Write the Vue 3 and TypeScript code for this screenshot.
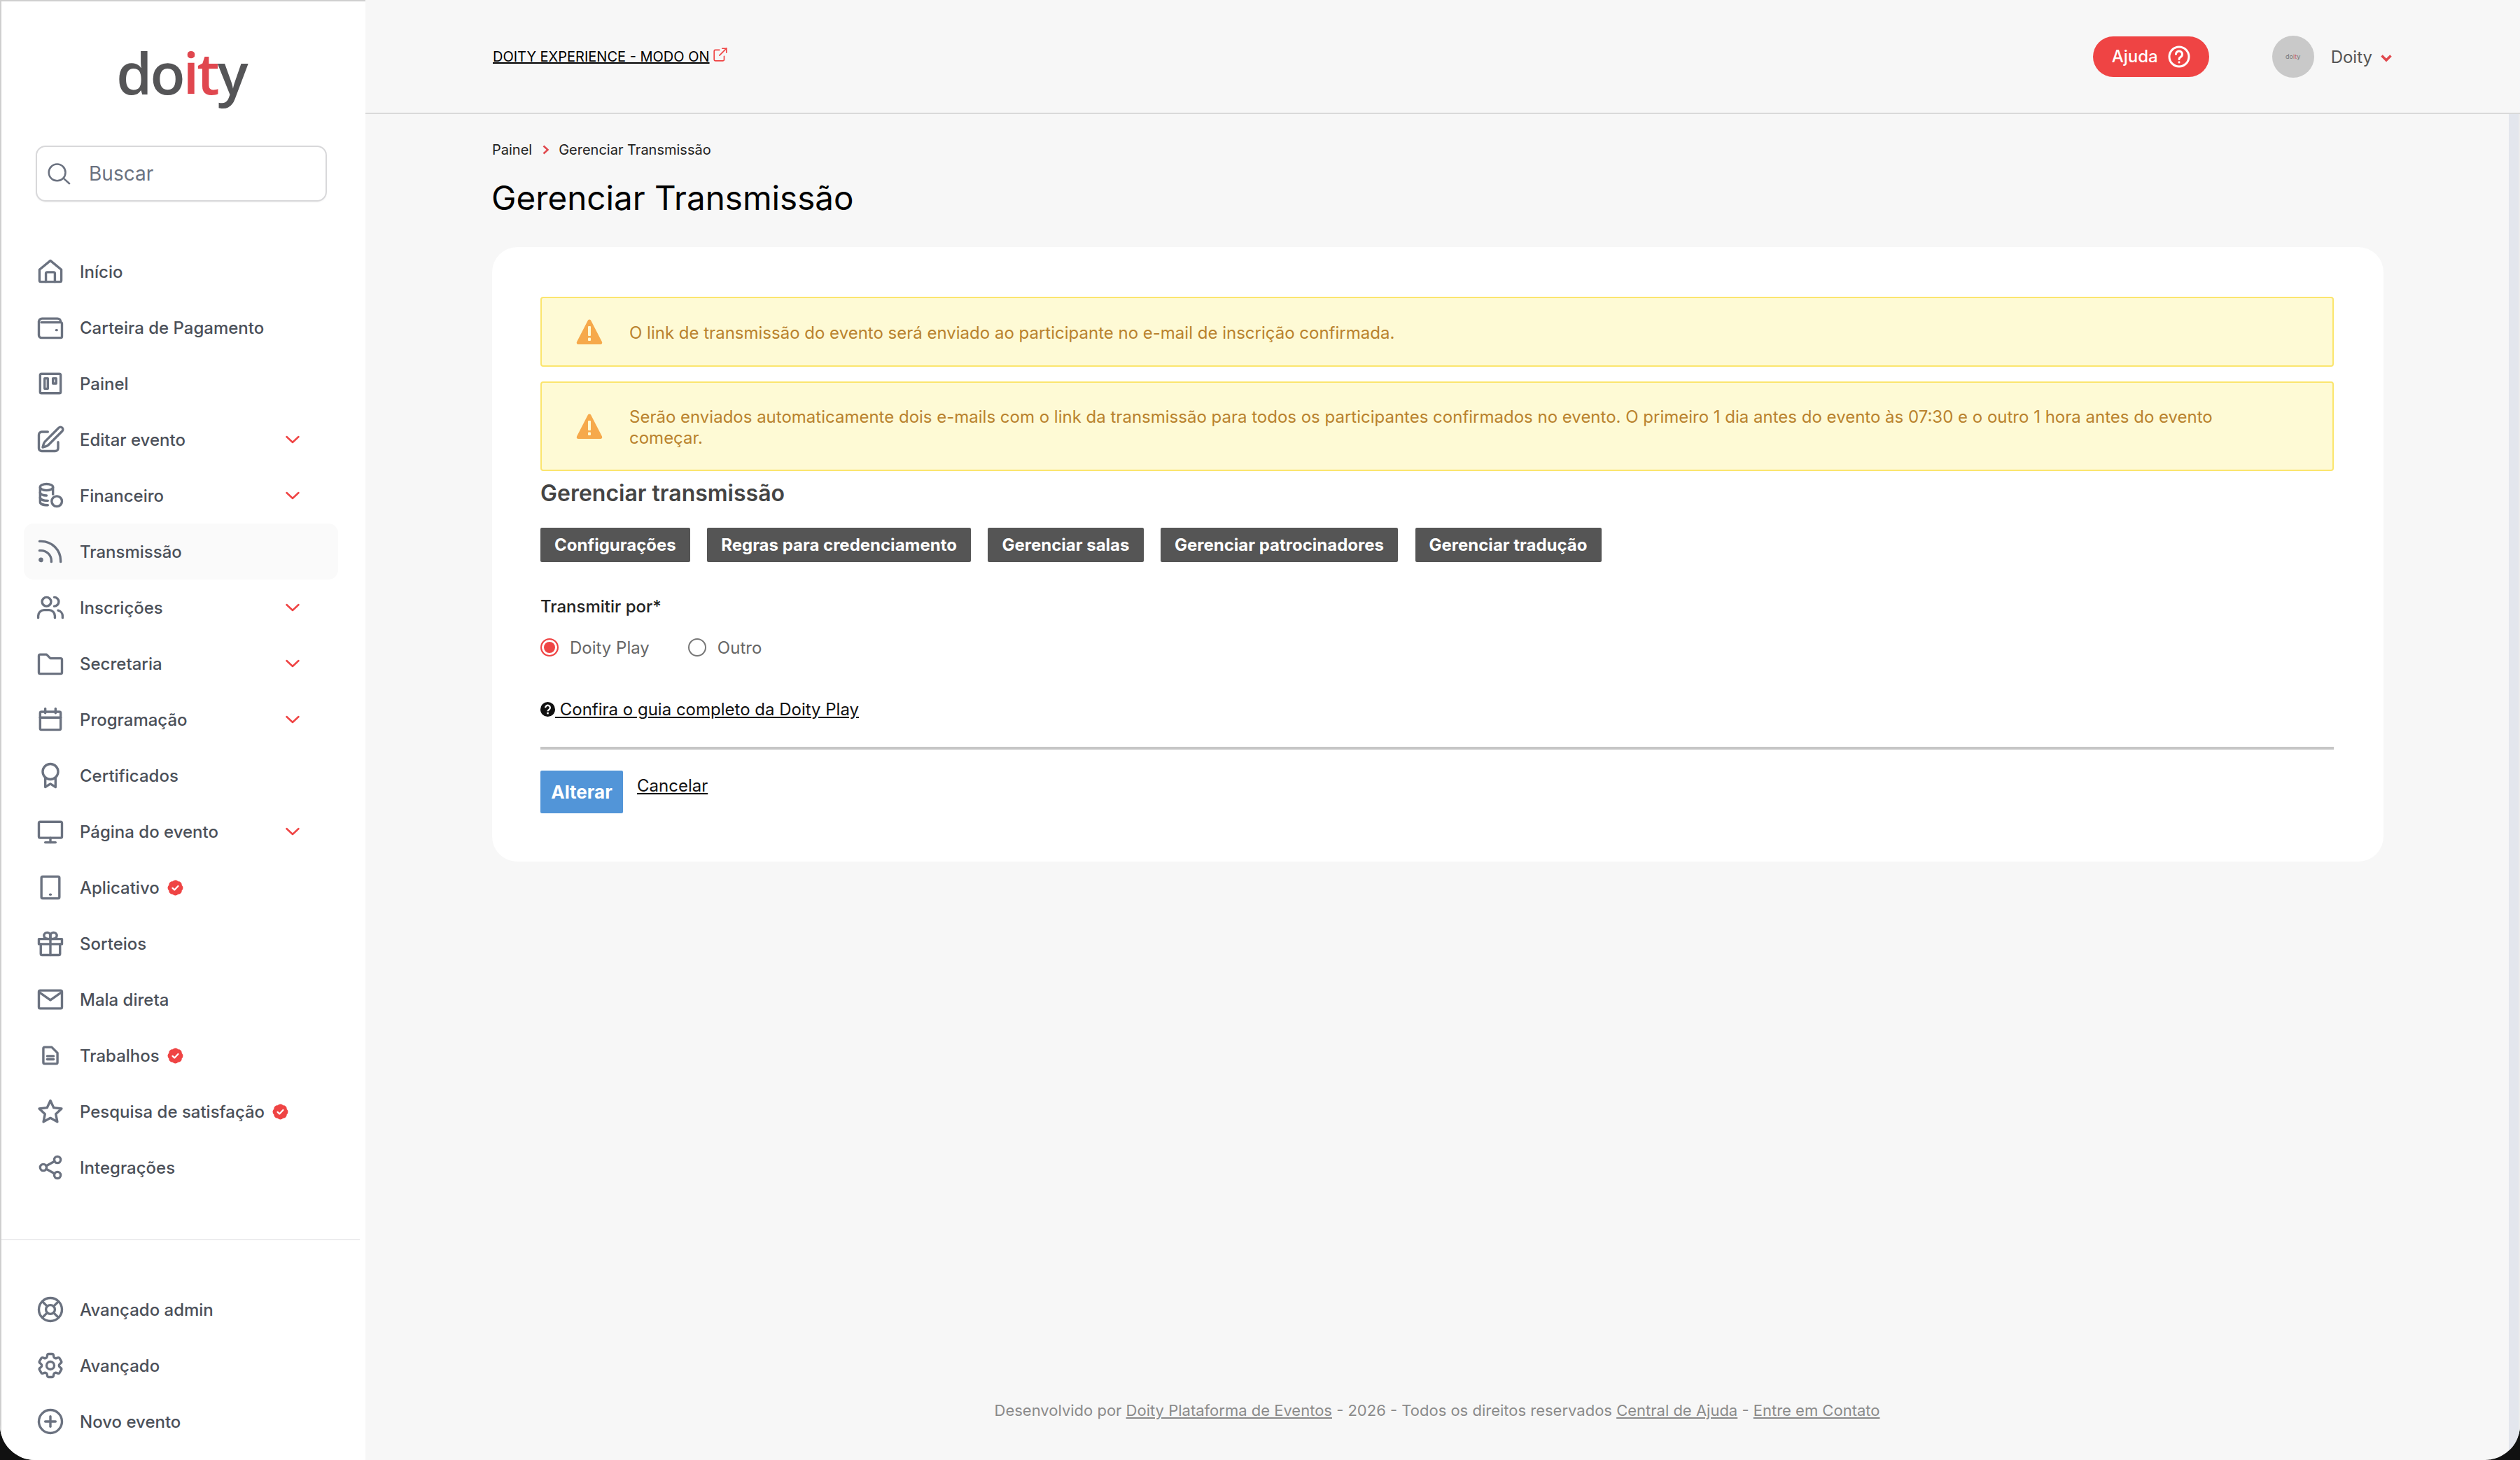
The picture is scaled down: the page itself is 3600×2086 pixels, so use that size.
<script setup lang="ts">
interface NavItem {
  label: string;
  icon: string[];
  chevron?: boolean;
  badge?: boolean;
  active?: boolean;
}

const icons: Record<string, string[]> = {
  home: ['M3.500 10.500 12 3.500l8.500 7V19a1 1 0 0 1-1 1h-15a1 1 0 0 1-1-1z', 'M8.500 20v-6.500a1 1 0 0 1 1-1h5a1 1 0 0 1 1 1V20'],
  wallet: ['M3 7.500A2.500 2.500 0 0 1 5.500 5h12A2.500 2.500 0 0 1 20 7.500', 'M3 7.500V18a2 2 0 0 0 2 2h15a1 1 0 0 0 1-1V9a1 1 0 0 0-1-1H5', 'M16.600 14h.4'],
  board: ['M4 5.500a1 1 0 0 1 1-1h14a1 1 0 0 1 1 1v13a1 1 0 0 1-1 1H5a1 1 0 0 1-1-1z', 'M7.500 8h2.500v8H7.500z', 'M14 8h2.500v4H14z'],
  edit: ['m16.862 4.487 1.687-1.688a1.875 1.875 0 1 1 2.652 2.652L10.582 16.070a4.500 4.500 0 0 1-1.897 1.130L6 18l.8-2.685a4.500 4.500 0 0 1 1.130-1.897l8.932-8.931Z', 'M18 14v4.750A2.250 2.250 0 0 1 15.750 21H5.250A2.250 2.250 0 0 1 3 18.750V8.250A2.250 2.250 0 0 1 5.250 6H10'],
  coins: ['M4 5.500C4 4.100 6.200 3 9 3s5 1.100 5 2.500S11.800 8 9 8 4 6.900 4 5.500z', 'M4 5.500V17c0 1.400 2.200 2.500 6 2.500', 'M14 5.500V11', 'M4 9.500c0 1.400 2.200 2.500 5 2.500', 'M4 13.500c0 1.400 2.200 2.500 6 2.500', 'M21 16.500a4 4 0 1 1-8 0 4 4 0 0 1 8 0z'],
  rss: ['M12.750 20v-.75a8 8 0 0 0-8-8H3.500', 'M3.500 4h1.250c8.500 0 15.250 6.750 15.250 15.250V20', 'M5.500 18.500a.9.9 0 1 1-1.800 0 .9.9 0 0 1 1.800 0z'],
  users: ['M12.500 7.500a3.500 3.500 0 1 1-7 0 3.500 3.500 0 0 1 7 0z', 'M15 4a3.500 3.500 0 0 1 0 7', 'M2.500 20v-1.500a4.500 4.500 0 0 1 4.500-4.500h4a4.500 4.500 0 0 1 4.500 4.500V20', 'M18 14.300a4.500 4.500 0 0 1 3.500 4.200V20'],
  folder: ['M3 6a1 1 0 0 1 1-1h5l3 3h8a1 1 0 0 1 1 1v10a1 1 0 0 1-1 1H4a1 1 0 0 1-1-1z'],
  calendar: ['M4 7a1 1 0 0 1 1-1h14a1 1 0 0 1 1 1v12a1 1 0 0 1-1 1H5a1 1 0 0 1-1-1z', 'M4 10.500h16', 'M8 3.500V7', 'M16 3.500V7'],
  award: ['M18 9a6 6 0 1 1-12 0 6 6 0 0 1 12 0z', 'M8 14v7l4-2.500 4 2.500v-7'],
  monitor: ['M3 5.500a1 1 0 0 1 1-1h16a1 1 0 0 1 1 1V16a1 1 0 0 1-1 1H4a1 1 0 0 1-1-1z', 'M12 17v3.500', 'M8 20.500h8'],
  tablet: ['M5 4.500a1 1 0 0 1 1-1h12a1 1 0 0 1 1 1v15a1 1 0 0 1-1 1H6a1 1 0 0 1-1-1z', 'M11.700 17.500h.6'],
  gift: ['M3 8.500h18v4H3z', 'M4.500 12.500V20a1 1 0 0 0 1 1h13a1 1 0 0 0 1-1v-7.500', 'M12 8.500V21', 'M12 8.500C10 8.500 7 8.500 7 6a2.300 2.300 0 0 1 5 0z', 'M12 8.500c2 0 5 0 5-2.500a2.300 2.300 0 0 0-5 0z'],
  mail: ['M3 6a1 1 0 0 1 1-1h16a1 1 0 0 1 1 1v12a1 1 0 0 1-1 1H4a1 1 0 0 1-1-1z', 'm3.500 6.500 8.500 6 8.500-6'],
  file: ['M6.500 6.500a1 1 0 0 1 1-1h5.500l4.500 4.500v7.500a1 1 0 0 1-1 1h-9a1 1 0 0 1-1-1z', 'M9.500 12.500h5', 'M9.500 15h5'],
  star: ['M12 3.500l2.600 5.600 6.100.7-4.500 4.200 1.200 6.100L12 17.100l-5.400 3 1.200-6.100-4.500-4.200 6.100-.7z'],
  share: ['M20 6a2.500 2.500 0 1 1-5 0 2.500 2.500 0 0 1 5 0z', 'M9 12a2.500 2.500 0 1 1-5 0 2.500 2.500 0 0 1 5 0z', 'M20 18a2.500 2.500 0 1 1-5 0 2.500 2.500 0 0 1 5 0z', 'm8.800 10.800 6.400-3.600', 'm8.800 13.200 6.400 3.600'],
  buoy: ['M21 12a9 9 0 1 1-18 0 9 9 0 0 1 18 0z', 'M15.500 12a3.500 3.500 0 1 1-7 0 3.500 3.500 0 0 1 7 0z', 'm5.700 5.700 3.800 3.800', 'm18.300 5.700-3.800 3.800', 'm5.700 18.300 3.800-3.800', 'm18.300 18.300-3.800-3.800'],
  gear: ['M9.594 3.940c.09-.542.56-.94 1.110-.94h2.593c.55 0 1.020.398 1.110.940l.213 1.281c.063.374.313.686.645.870.074.040.147.083.220.127.325.196.720.257 1.075.124l1.217-.456a1.125 1.125 0 0 1 1.370.490l1.296 2.247a1.125 1.125 0 0 1-.260 1.431l-1.003.827c-.293.241-.438.613-.430.992a7.723 7.723 0 0 1 0 .255c-.008.378.137.750.430.991l1.004.827c.424.350.534.955.260 1.430l-1.298 2.247a1.125 1.125 0 0 1-1.369.491l-1.217-.456c-.355-.133-.750-.072-1.076.124a6.470 6.470 0 0 1-.220.128c-.331.183-.581.495-.644.869l-.213 1.281c-.090.543-.560.940-1.110.940h-2.594c-.550 0-1.019-.398-1.110-.940l-.213-1.281c-.062-.374-.312-.686-.644-.870a6.520 6.520 0 0 1-.220-.127c-.325-.196-.720-.257-1.076-.124l-1.217.456a1.125 1.125 0 0 1-1.369-.490l-1.297-2.247a1.125 1.125 0 0 1 .260-1.431l1.004-.827c.292-.240.437-.613.430-.991a6.932 6.932 0 0 1 0-.255c.007-.380-.138-.751-.430-.992l-1.004-.827a1.125 1.125 0 0 1-.260-1.430l1.297-2.247a1.125 1.125 0 0 1 1.370-.491l1.216.456c.356.133.751.072 1.076-.124.072-.044.146-.086.220-.128.332-.183.582-.495.644-.869l.214-1.280Z', 'M15 12a3 3 0 1 1-6 0 3 3 0 0 1 6 0Z'],
  plus: ['M21 12a9 9 0 1 1-18 0 9 9 0 0 1 18 0z', 'M12 8v8', 'M8 12h8'],
};

const navItems: NavItem[] = [
  { label: 'Início', icon: icons.home },
  { label: 'Carteira de Pagamento', icon: icons.wallet },
  { label: 'Painel', icon: icons.board },
  { label: 'Editar evento', icon: icons.edit, chevron: true },
  { label: 'Financeiro', icon: icons.coins, chevron: true },
  { label: 'Transmissão', icon: icons.rss, active: true },
  { label: 'Inscrições', icon: icons.users, chevron: true },
  { label: 'Secretaria', icon: icons.folder, chevron: true },
  { label: 'Programação', icon: icons.calendar, chevron: true },
  { label: 'Certificados', icon: icons.award },
  { label: 'Página do evento', icon: icons.monitor, chevron: true },
  { label: 'Aplicativo', icon: icons.tablet, badge: true },
  { label: 'Sorteios', icon: icons.gift },
  { label: 'Mala direta', icon: icons.mail },
  { label: 'Trabalhos', icon: icons.file, badge: true },
  { label: 'Pesquisa de satisfação', icon: icons.star, badge: true },
  { label: 'Integrações', icon: icons.share },
];

const bottomItems: NavItem[] = [
  { label: 'Avançado admin', icon: icons.buoy },
  { label: 'Avançado', icon: icons.gear },
  { label: 'Novo evento', icon: icons.plus },
];

const tabs = ['Configurações', 'Regras para credenciamento', 'Gerenciar salas', 'Gerenciar patrocinadores', 'Gerenciar tradução'];

const alerts = [
  'O link de transmissão do evento será enviado ao participante no e-mail de inscrição confirmada.',
  'Serão enviados automaticamente dois e-mails com o link da transmissão para todos os participantes confirmados no evento. O primeiro 1 dia antes do evento às 07:30 e o outro 1 hora antes do evento começar.',
];

const badgePath = 'M8.603 3.799A4.49 4.49 0 0 1 12 2.25c1.357 0 2.573.6 3.397 1.549a4.49 4.49 0 0 1 3.498 1.307 4.491 4.491 0 0 1 1.307 3.497A4.49 4.49 0 0 1 21.75 12a4.49 4.49 0 0 1-1.549 3.397 4.491 4.491 0 0 1-1.307 3.497 4.491 4.491 0 0 1-3.497 1.307A4.49 4.49 0 0 1 12 21.75a4.49 4.49 0 0 1-3.397-1.549 4.49 4.49 0 0 1-3.498-1.306 4.491 4.491 0 0 1-1.307-3.498A4.49 4.49 0 0 1 2.25 12c0-1.357.6-2.573 1.549-3.397a4.49 4.49 0 0 1 1.307-3.497 4.49 4.49 0 0 1 3.497-1.307Z';
</script>

<template>
  <div class="app">
    <aside class="sidebar">
      <div class="brand"><span>do</span><span class="brand-red">it</span><span>y</span></div>
      <div class="search">
        <svg class="search-icon" viewBox="0 0 24 24" fill="none" stroke="currentColor" stroke-width="1.600" stroke-linecap="round">
          <path d="M18 11a7.500 7.500 0 1 1-15 0 7.500 7.500 0 0 1 15 0z" />
          <path d="m16.500 16.500 5 4.500" />
        </svg>
        <span>Buscar</span>
      </div>
      <nav class="nav">
        <a v-for="item in navItems" :key="item.label" class="nav-row" :class="{ active: item.active }">
          <svg class="nav-icon" viewBox="0 0 24 24" fill="none" stroke="currentColor" stroke-width="1.850" stroke-linecap="round" stroke-linejoin="round">
            <path v-for="d in item.icon" :key="d" :d="d" />
          </svg>
          <span class="nav-label">{{ item.label }}</span>
          <svg v-if="item.badge" class="badge" viewBox="0 0 24 24">
            <path :d="badgePath" fill="#ef4444" />
            <path d="m8.500 12.300 2.400 2.300 4.600-4.800" fill="none" stroke="#fff" stroke-width="2" stroke-linecap="round" stroke-linejoin="round" />
          </svg>
          <svg v-if="item.chevron" class="chevron" viewBox="0 0 20 12" fill="none" stroke="#ef4444" stroke-width="2.500" stroke-linecap="round" stroke-linejoin="round">
            <path d="m1.500 2 8.500 8 8.500-8" />
          </svg>
        </a>
      </nav>
      <div class="side-divider"></div>
      <nav class="nav nav-bottom">
        <a v-for="item in bottomItems" :key="item.label" class="nav-row">
          <svg class="nav-icon" viewBox="0 0 24 24" fill="none" stroke="currentColor" stroke-width="1.850" stroke-linecap="round" stroke-linejoin="round">
            <path v-for="d in item.icon" :key="d" :d="d" />
          </svg>
          <span class="nav-label">{{ item.label }}</span>
        </a>
      </nav>
    </aside>

    <div class="main">
      <header class="topbar">
        <a class="experience">DOITY EXPERIENCE - MODO ON</a>
        <svg class="external" viewBox="0 0 20 20" fill="none" stroke="#ef4444" stroke-width="1.500" stroke-linecap="round" stroke-linejoin="round">
          <path d="M9 4H3.500A1.500 1.500 0 0 0 2 5.500v11A1.500 1.500 0 0 0 3.500 18h10a1.500 1.500 0 0 0 1.500-1.500V12" />
          <path d="M9 11 18 2" />
          <path d="M12.500 2H18v5.500" />
        </svg>
        <div class="help">
          <span>Ajuda</span>
          <svg class="help-icon" viewBox="0 0 32 32" fill="none" stroke="#fff" stroke-width="3" stroke-linecap="round">
            <circle cx="16" cy="16" r="14" />
            <path d="M11.500 12.500a4.500 4.500 0 1 1 6.800 3.900c-1.400.8-2.300 1.700-2.300 3.100" />
            <path d="M16 23.800v.1" />
          </svg>
        </div>
        <div class="avatar"><span>do</span><span class="avatar-red">it</span><span>y</span></div>
        <span class="user">Doity</span>
        <svg class="user-chevron" viewBox="0 0 16 12" fill="none" stroke="#e0474c" stroke-width="3.500" stroke-linejoin="miter">
          <path d="m1.500 2.500 6.500 6.500 6.500-6.500" />
        </svg>
      </header>

      <div class="body">
        <div class="content">
          <div class="crumbs">
            <span>Painel</span>
            <svg class="crumb-chevron" viewBox="0 0 10 14" fill="none" stroke="#e0474c" stroke-width="2.500">
              <path d="m1.500 1.500 6 5.500-6 5.500" />
            </svg>
            <span>Gerenciar Transmissão</span>
          </div>
          <h1 class="title">Gerenciar Transmissão</h1>

          <section class="card">
            <div v-for="text in alerts" :key="text" class="alert">
              <svg class="alert-icon" viewBox="0 0 38 38">
                <path d="M17 2.500c1-1.500 3-1.500 4 0l16 31c.8 1.500-.2 3.500-2 3.500H3c-1.800 0-2.800-2-2-3.500z" fill="#f6a94b" />
                <rect x="17" y="11" width="4" height="14" rx="1" fill="#fefad5" />
                <rect x="17" y="27.500" width="4" height="4.500" rx="1" fill="#fefad5" />
              </svg>
              <p class="alert-text">{{ text }}</p>
            </div>

            <h2 class="section-title">Gerenciar transmissão</h2>
            <div class="tabs">
              <button v-for="tab in tabs" :key="tab" class="tab">{{ tab }}</button>
            </div>

            <div class="field-label">Transmitir por*</div>
            <div class="radios">
              <label class="radio-item">
                <span class="radio checked"></span>
                <span>Doity Play</span>
              </label>
              <label class="radio-item">
                <span class="radio"></span>
                <span>Outro</span>
              </label>
            </div>

            <a class="guide">
              <svg class="guide-icon" viewBox="0 0 20 20">
                <circle cx="10" cy="10" r="10" fill="#111" />
                <path d="M6.800 7.800a3.200 3.200 0 1 1 4.900 2.700c-1 .6-1.700 1.100-1.700 2.200" fill="none" stroke="#fff" stroke-width="2.200" />
                <rect x="8.800" y="14" width="2.400" height="2.500" fill="#fff" />
              </svg><span class="guide-text"> Confira o guia completo da Doity Play</span>
            </a>

            <div class="form-divider"></div>
            <div class="actions">
              <button class="submit">Alterar</button>
              <a class="cancel">Cancelar</a>
            </div>
          </section>

          <footer class="footer">
            Desenvolvido por <a>Doity Plataforma de Eventos</a> - 2026 - Todos os direitos reservados <a>Central de Ajuda</a> - <a>Entre em Contato</a>
          </footer>
        </div>
        <div class="scrollbar"></div>
      </div>
    </div>
  </div>
</template>

<style scoped>
* { box-sizing: border-box; }
.app {
  display: flex;
  width: 3600px;
  height: 2086px;
  overflow: hidden;
  background: #f7f7f7;
  font-family: Inter, "Liberation Sans", sans-serif;
  border-radius: 0 0 50px 50px;
}
.sidebar {
  display: flex;
  flex-direction: column;
  width: 522px;
  flex: none;
  background: #fff;
  border-top: 2px solid #cfcfcf;
  border-left: 2px solid #cfcfcf;
}
.brand {
  height: 206px;
  padding: 36px 6px 0 0;
  text-align: center;
  font-family: "Open Sans", sans-serif;
  font-size: 82px;
  font-weight: 600;
  line-height: 130px;
  color: #555557;
  letter-spacing: -3px;
}
.brand-red { color: #e0474f; }
.search {
  display: flex;
  align-items: center;
  gap: 24px;
  width: 416px;
  height: 80px;
  margin-left: 49px;
  padding-left: 12px;
  border: 2px solid #d8d8da;
  border-radius: 14px;
  color: #6b7280;
  font-size: 28px;
  box-shadow: 0 1px 2px rgba(0, 0, 0, 0.05);
}
.search-icon { width: 38px; height: 38px; flex: none; }
.nav { display: flex; flex-direction: column; margin: 60px 39px 0 32px; }
.nav-row {
  display: flex;
  align-items: center;
  height: 80px;
  padding: 0 55px 0 16px;
  border-radius: 14px;
  color: #6b7280;
}
.nav-row.active { background: #fafafa; }
.nav-icon { width: 44px; height: 44px; flex: none; }
.nav-label {
  margin-left: 20px;
  font-size: 24px;
  font-weight: 500;
  color: #4b5059;
}
.badge { width: 27px; height: 27px; margin-left: 9px; flex: none; }
.chevron { width: 20px; height: 12px; margin-left: auto; flex: none; }
.side-divider { height: 2px; margin: 62px 8px 0 0; background: #ececee; }
.nav-bottom { margin-top: 59px; }

.main { display: flex; flex-direction: column; flex: 1; min-width: 0; }
.topbar {
  display: flex;
  align-items: center;
  height: 163px;
  flex: none;
  padding: 0 183px 0 182px;
  border-bottom: 2px solid #d9d9d9;
}
.experience {
  font-size: 20px;
  color: #000;
  text-decoration: underline;
}
.external { width: 22px; height: 22px; margin: -6px 0 0 4px; flex: none; }
.help {
  display: flex;
  align-items: center;
  justify-content: space-between;
  width: 166px;
  height: 58px;
  margin-left: auto;
  padding: 0 27px;
  border-radius: 29px;
  background: #ef4444;
  color: #fff;
  font-size: 24px;
  font-weight: 500;
}
.help-icon { width: 32px; height: 32px; flex: none; }
.avatar {
  display: flex;
  align-items: center;
  justify-content: center;
  width: 60px;
  height: 60px;
  margin-left: 90px;
  border-radius: 50%;
  background: #c9c9c9;
  color: #777;
  font-size: 9px;
}
.avatar-red { color: #c26a70; }
.user { margin-left: 24px; font-size: 24px; color: #555; padding-top: 2px; }
.user-chevron { width: 16px; height: 12px; margin: 4px 0 0 12px; flex: none; }

.body { display: flex; flex: 1; min-height: 0; }
.content {
  display: flex;
  flex-direction: column;
  flex: 1;
  min-width: 0;
  padding: 37px 0 56px;
}
.scrollbar { width: 16px; flex: none; background: #e3e6ed; border-right: 2px solid #ededed; }
.crumbs {
  display: flex;
  align-items: center;
  height: 28px;
  margin-left: 181px;
  font-size: 20px;
  color: #222;
}
.crumb-chevron { width: 10px; height: 14px; margin: 0 13px 0 15px; flex: none; }
.title {
  margin: 23px 0 0 180px;
  font-size: 47.600px;
  line-height: 64px;
  font-weight: 400;
  color: #000;
}
.card {
  margin: 38px 179px 0 181px;
  padding: 71px 71px 69px 69px;
  background: #fff;
  border-radius: 36px;
}
.alert {
  display: flex;
  align-items: center;
  padding: 29px 60px 29px 49px;
  margin-bottom: 21px;
  background: #fefad5;
  border: 2px solid #fbe56e;
  border-radius: 4px;
}
.alert + .alert { margin-bottom: 0; }
.alert-icon { width: 38px; height: 38px; flex: none; }
.alert-text {
  margin: 5px 0 1px 38px;
  font-size: 24px;
  line-height: 30px;
  color: #b9822d;
}
.section-title {
  margin: 12px 0 0;
  font-size: 32px;
  line-height: 40px;
  font-weight: 600;
  color: #444;
}
.tabs { display: flex; gap: 24.500px; margin-top: 29px; }
.tab {
  height: 49px;
  padding: 0 20px;
  border: 0;
  border-radius: 2px;
  background: #555;
  color: #fff;
  font: 700 24px Inter, sans-serif;
}
.field-label {
  margin-top: 49px;
  font-size: 24px;
  line-height: 30px;
  font-weight: 500;
  color: #222;
}
.radios { display: flex; gap: 55px; margin-top: 29px; }
.radio-item {
  display: flex;
  align-items: center;
  gap: 16px;
  height: 28px;
  font-size: 24px;
  color: #666;
}
.radio {
  width: 26px;
  height: 26px;
  border: 2px solid #777;
  border-radius: 50%;
  flex: none;
}
.radio.checked {
  border-color: #ef4444;
  background: #ef4444;
  box-shadow: inset 0 0 0 3px #fff;
}
.guide {
  display: flex;
  align-items: center;
  margin-top: 59px;
  height: 30px;
  font-size: 24px;
  color: #111;
}
.guide-icon { width: 21px; height: 21px; flex: none; }
.guide-text { white-space: pre; text-decoration: underline; }
.form-divider { height: 4px; margin-top: 39px; background: #c6c6c6; }
.actions { display: flex; align-items: flex-start; gap: 20px; margin-top: 30px; }
.submit {
  width: 118px;
  height: 61px;
  border: 0;
  border-radius: 2px;
  background: #5295d8;
  color: #fff;
  font: 700 26px Inter, sans-serif;
}
.cancel {
  margin-top: 7px;
  font-size: 24px;
  line-height: 30px;
  color: #111;
  text-decoration: underline;
}
.footer {
  margin-top: auto;
  text-align: center;
  font-size: 22px;
  line-height: 30px;
  color: #8a8a8a;
}
.footer a { text-decoration: underline; }
</style>

<style>
html, body { background: #111; }
</style>
